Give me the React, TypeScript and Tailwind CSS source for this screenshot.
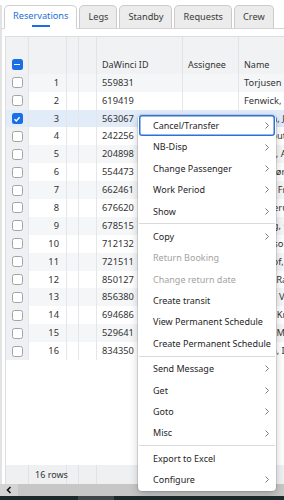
import React from "react";

const ids = [
  "559831", "619419", "563067", "242256", "204898", "554473", "662461", "676620",
  "678515", "712132", "721511", "850127", "856380", "694686", "529641", "834350",
];
const names = [
  "Torjusen Eirik", "Fenwick, Ian", "Hansen, Jonas", "Westhout, Per", "Nilssen, Astrid",
  "Lundesør, Kjell", "Strand, Frida", "Hjelleverud, Siv", "Moberg, Carl", "Johansson, Eva",
  "Bergstof, Lene", "Nilsen, Ragnhild", "Brekke, Vanja", "Myhre, Kristoffer", "Sunde, Marit",
  "Karlsen, Ida",
];

type Item = { label: string; sub?: boolean; disabled?: boolean; focus?: boolean } | "sep";
const menu: Item[] = [
  { label: "Cancel/Transfer", sub: true, focus: true },
  { label: "NB-Disp", sub: true },
  { label: "Change Passenger", sub: true },
  { label: "Work Period", sub: true },
  { label: "Show", sub: true },
  "sep",
  { label: "Copy", sub: true },
  { label: "Return Booking", disabled: true },
  { label: "Change return date", disabled: true },
  { label: "Create transit" },
  { label: "View Permanent Schedule" },
  { label: "Create Permanent Schedule" },
  "sep",
  { label: "Send Message", sub: true },
  { label: "Get", sub: true },
  { label: "Goto", sub: true },
  { label: "Misc", sub: true },
  "sep",
  { label: "Export to Excel" },
  { label: "Configure", sub: true },
];

function Chevron() {
  return (
    <svg width="4" height="7" viewBox="0 0 4 7" className="shrink-0">
      <polyline points="0.5,0.5 3.5,3.5 0.5,6.5" fill="none" stroke="#7a7a7a" strokeWidth="1" />
    </svg>
  );
}

function Box({ state }: { state: "off" | "on" | "ind" }) {
  if (state === "off")
    return <div className="w-[11px] h-[11px] rounded-[2.5px] border border-[#a3a3a3] bg-white" />;
  return (
    <div className="w-[11px] h-[11px] rounded-[2.5px] bg-[#1a6fe6] flex items-center justify-center">
      {state === "ind" ? (
        <div className="w-[6px] h-[1.5px] bg-white" />
      ) : (
        <svg width="8" height="8" viewBox="0 0 8 8">
          <polyline points="1.5,4.2 3.3,6 6.6,2.2" fill="none" stroke="white" strokeWidth="1.4" />
        </svg>
      )}
    </div>
  );
}

export default function App() {
  return (
    <div className="relative w-[284px] h-[500px] overflow-hidden bg-white text-[9px] text-[#333] font-['Noto_Sans',sans-serif] flex flex-col">
      <div className="flex-1 mt-[5px] border-l-2 border-[#e3e3e3] flex flex-col min-h-0">
        {/* Tabs */}
        <div className="h-[24px] flex items-end gap-[2px] pl-[2px] border-b border-[#d4d4d4] shrink-0">
          <div className="h-[24px] -mb-px px-[8px] rounded-t-[5px] border border-[#cfcfcf] border-b-white bg-white flex flex-col items-center">
            <div className="flex-1 flex items-center text-[#1a6fd8] text-[9.2px]">Reservations</div>
            <div className="w-[18px] h-[2px] bg-[#1a6fe6] mb-[1px]" />
          </div>
          {["Legs", "Standby", "Requests", "Crew"].map((t) => (
            <div
              key={t}
              className="h-[23px] px-[8px] rounded-t-[5px] border border-b-0 border-[#cbcbcb] bg-[#ececec] flex items-center text-[9.2px] text-[#3a3a3a]"
            >
              {t}
            </div>
          ))}
        </div>

        {/* Grid */}
        <div className="mt-[7px] ml-[3px] flex-1 border-l border-t border-[#dcdde0] flex flex-col min-h-0">
          {/* group header */}
          <div className="h-[18.5px] flex bg-[#f1f2f4] shrink-0">
            <div className="w-[23px] border-r border-[#e1e3e6]" />
            <div className="w-[38px] border-r border-[#e1e3e6]" />
            <div className="w-[12px] border-r border-[#e1e3e6]" />
            <div className="w-[18px] border-r border-[#e1e3e6]" />
            <div className="w-[86px] border-r border-[#e1e3e6]" />
            <div className="w-[56px] border-r border-[#e1e3e6]" />
            <div className="flex-1" />
          </div>
          {/* column header */}
          <div className="h-[18.3px] flex bg-[#f1f2f4] shrink-0 text-[#333]">
            <div className="w-[23px] border-r border-[#e1e3e6] flex items-center justify-center">
              <Box state="ind" />
            </div>
            <div className="w-[38px] border-r border-[#e1e3e6]" />
            <div className="w-[12px] border-r border-[#e1e3e6]" />
            <div className="w-[18px] border-r border-[#e1e3e6]" />
            <div className="w-[86px] border-r border-[#e1e3e6] flex items-center pl-[5px]">DaWinci ID</div>
            <div className="w-[56px] border-r border-[#e1e3e6] flex items-center pl-[5px]">Assignee</div>
            <div className="flex-1 flex items-center pl-[5px] whitespace-nowrap overflow-hidden">Name</div>
          </div>
          {/* rows */}
          {ids.map((id, i) => {
            const sel = i === 2;
            const odd = i % 2 === 0;
            const bg = sel ? "bg-[#e2ebf8]" : odd ? "bg-[#f5f6f8]" : "bg-white";
            const cbBg = sel ? "bg-[#e2ebf8]" : "bg-[#eff0f3]";
            return (
              <div key={id} className={`h-[17.9px] flex shrink-0 ${bg}`}>
                <div className={`w-[23px] border-r border-[#e4e6e9] flex items-center justify-center ${cbBg}`}>
                  <Box state={sel ? "on" : "off"} />
                </div>
                <div className="w-[38px] border-r border-[#e4e6e9] flex items-center justify-end pr-[7px] text-[9.3px]">
                  {i + 1}
                </div>
                <div className="w-[12px] border-r border-[#e4e6e9]" />
                <div className="w-[18px] border-r border-[#e4e6e9]" />
                <div className="w-[86px] border-r border-[#e4e6e9] flex items-center pl-[5px] text-[9.3px]">{id}</div>
                <div className="w-[56px] border-r border-[#e4e6e9]" />
                <div className="flex-1 flex items-center pl-[5px] whitespace-nowrap overflow-hidden text-[9.3px]">
                  {names[i]}
                </div>
              </div>
            );
          })}
          <div className="flex-1 bg-white" />
          {/* footer */}
          <div className="h-[19.5px] flex bg-[#eef0f2] shrink-0">
            <div className="w-[23px] border-r border-[#e0e2e5]" />
            <div className="w-[38px] border-r border-[#e0e2e5] flex items-center pl-[6px] whitespace-nowrap">16 rows</div>
            <div className="w-[12px] border-r border-[#e0e2e5]" />
            <div className="w-[18px] border-r border-[#e0e2e5]" />
            <div className="w-[86px] border-r border-[#e0e2e5]" />
            <div className="w-[56px] border-r border-[#e0e2e5]" />
            <div className="flex-1" />
          </div>
        </div>
      </div>

      {/* horizontal scrollbar */}
      <div className="h-[12px] flex shrink-0 bg-[#c7c7c7]">
        <div className="w-[18px] flex items-center justify-center bg-[#d3d3d3]">
          <svg width="6" height="8" viewBox="0 0 6 8">
            <polyline points="4.5,1 1.5,4 4.5,7" fill="none" stroke="#111" strokeWidth="1.6" />
          </svg>
        </div>
      </div>
      {/* taskbar strip */}
      <div className="h-[4px] flex shrink-0 bg-[#1d2a2b]">
        <div className="w-[78px]" />
        <div className="w-[36px] bg-[#3f4749]" />
      </div>

      {/* Context menu */}
      <div className="absolute left-[138px] top-[115px] w-[138px] bg-white rounded-[4px] shadow-[0_0_0_1px_rgba(0,0,0,0.1),0_3px_8px_rgba(0,0,0,0.22)] flex flex-col">
        {menu.map((m, i) =>
          m === "sep" ? (
            <div key={i} className="h-px my-[1.5px] mx-px bg-[#dadada]" />
          ) : (
            <div
              key={i}
              className={`h-[21.4px] mx-px pl-[14px] pr-[6px] flex items-center justify-between rounded-[3px] whitespace-nowrap ${
                m.focus ? "shadow-[inset_0_0_0_1.5px_#2a72da]" : ""
              } ${m.disabled ? "text-[#a3a3a3]" : "text-[#262626]"}`}
            >
              <span>{m.label}</span>
              {m.sub ? <Chevron /> : null}
            </div>
          )
        )}
      </div>
    </div>
  );
}
